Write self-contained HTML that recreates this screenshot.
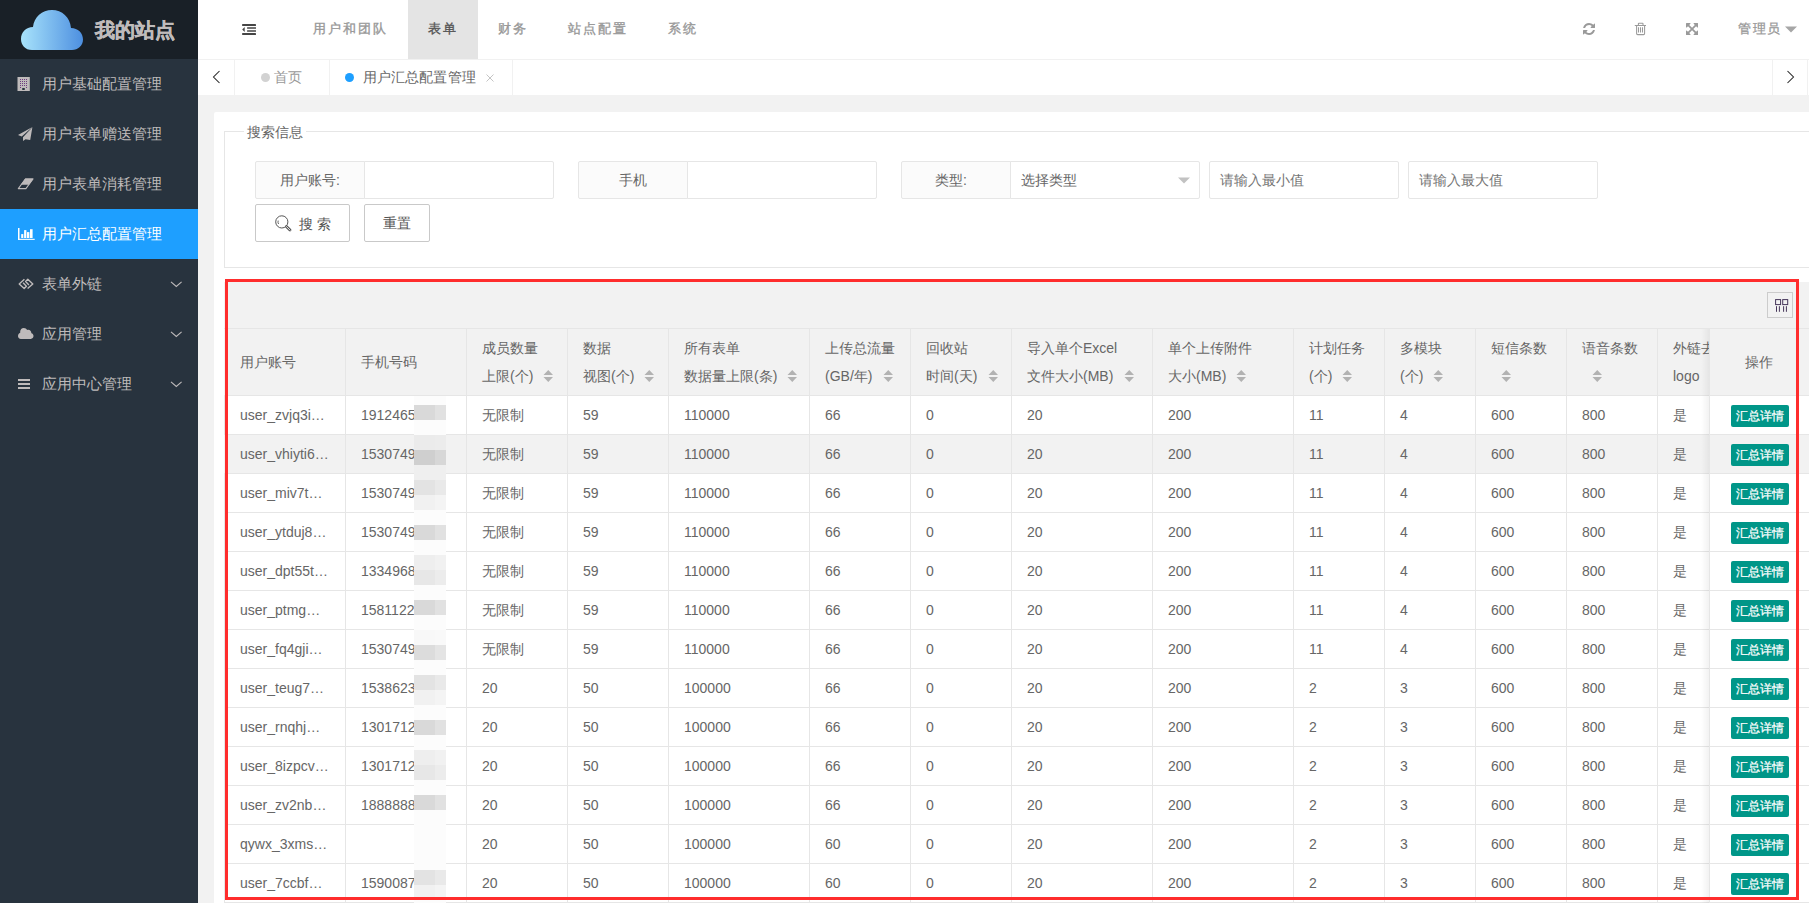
<!DOCTYPE html><html><head><meta charset="utf-8"><style>
*{margin:0;padding:0;box-sizing:border-box}
html,body{width:1809px;height:903px;overflow:hidden;background:#f2f2f2;font-family:"Liberation Sans", sans-serif;}
.a{position:absolute;white-space:nowrap}
.side{position:absolute;left:0;top:0;width:198px;height:903px;background:#28333E}
.logo{position:absolute;left:0;top:0;width:198px;height:59px;background:#192027}
.mi{position:absolute;left:0;width:198px;height:50px;color:rgb(191,187,187);font-size:15px;line-height:50px}
.mi .t{position:absolute;left:42px;top:0}
.mi svg{position:absolute}
.hd{position:absolute;left:198px;top:0;width:1611px;height:59px;background:#fff}
.nav{color:#989898;font-size:12.5px;letter-spacing:2.1px;line-height:20px;top:19px;-webkit-text-stroke:0.35px}
.tabbar{position:absolute;left:198px;top:59px;width:1611px;height:36px;background:#fff;border-top:1px solid #f1f1f1}
.card{position:absolute;left:214px;top:112px;width:1600px;height:800px;background:#fff;border-radius:2px}
.fs{position:absolute;left:224px;top:131px;width:1600px;height:137px;border:1px solid #e6e6e6}
.lbl{position:absolute;top:161px;height:38px;width:110px;border:1px solid #e6e6e6;background:#fbfbfb;border-radius:2px 0 0 2px;color:#666;font-size:14px;line-height:36px;text-align:center}
.inp{position:absolute;top:161px;height:38px;width:190px;border:1px solid #e6e6e6;background:#fff;border-radius:0 2px 2px 0;color:#757575;font-size:14px;line-height:36px;padding-left:10px}
.btn{position:absolute;top:204px;height:38px;border:1px solid #c9c9c9;background:#fff;border-radius:2px;color:#555;font-size:14px;line-height:36px}
.tb{color:#666;font-size:14px;line-height:20px}
.hl{position:absolute;height:1px;background:#e6e6e6}
.vl{position:absolute;width:1px;background:#e6e6e6}
.op{position:absolute;width:58px;height:22px;background:#009688;color:#fff;font-size:12px;line-height:22px;text-align:center;border-radius:2px;-webkit-text-stroke:0.25px #fff}
</style></head><body>
<div class="side"></div><div class="logo"></div>
<svg class="a" style="left:20px;top:9px" width="64" height="42" viewBox="0 0 64 42">
<defs><linearGradient id="cg" x1="0" x2="1" y1="0" y2="0"><stop offset="0" stop-color="#a8e3fb"/><stop offset="1" stop-color="#4d8fe0"/></linearGradient></defs>
<path fill="url(#cg)" d="M12,41 C5,41 1,36 1,30 C1,23 6,18 13,18 C14,8 22,1 32,1 C42,1 50,8 51,19 C58,19 63,24 63,30.5 C63,36.5 58,41 52,41 Z"/></svg>
<div class="a" style="left:95px;top:16px;font-size:20px;font-weight:bold;-webkit-text-stroke:0.4px rgb(191,187,187);color:rgb(191,187,187);line-height:28px">我的站点</div>
<div class="mi" style="top:59px;"><span class="t">用户基础配置管理</span>
</div>
<div class="mi" style="top:109px;"><span class="t">用户表单赠送管理</span>
</div>
<div class="mi" style="top:159px;"><span class="t">用户表单消耗管理</span>
</div>
<div class="mi" style="top:209px;background:#1E9FFF;color:#fff;"><span class="t">用户汇总配置管理</span>
</div>
<div class="mi" style="top:259px;"><span class="t">表单外链</span>
<svg style="left:170px;top:22px" width="13" height="7" viewBox="0 0 13 7"><path d="M1,0.8 L6.3,5.4 L11.6,0.8" fill="none" stroke="rgb(191,187,187)" stroke-width="1.1"/></svg>
</div>
<div class="mi" style="top:309px;"><span class="t">应用管理</span>
<svg style="left:170px;top:22px" width="13" height="7" viewBox="0 0 13 7"><path d="M1,0.8 L6.3,5.4 L11.6,0.8" fill="none" stroke="rgb(191,187,187)" stroke-width="1.1"/></svg>
</div>
<div class="mi" style="top:359px;"><span class="t">应用中心管理</span>
<svg style="left:170px;top:22px" width="13" height="7" viewBox="0 0 13 7"><path d="M1,0.8 L6.3,5.4 L11.6,0.8" fill="none" stroke="rgb(191,187,187)" stroke-width="1.1"/></svg>
</div>
<svg class="a" style="left:17px;top:77px" width="13" height="14" viewBox="0 0 13 14"><rect x="0.5" y="0" width="12.3" height="14" fill="rgb(191,187,187)"/>
<g fill="#6e3d80"><rect x="3" y="2" width="1" height="1"/><rect x="5" y="2" width="1" height="1"/><rect x="7" y="2" width="1" height="1"/><rect x="9" y="2" width="1" height="1"/><rect x="3" y="4" width="1" height="1"/><rect x="5" y="4" width="1" height="1"/><rect x="7" y="4" width="1" height="1"/><rect x="9" y="4" width="1" height="1"/><rect x="3" y="6" width="1" height="1"/><rect x="5" y="6" width="1" height="1"/><rect x="7" y="6" width="1" height="1"/><rect x="9" y="6" width="1" height="1"/><rect x="3" y="8" width="1" height="1"/><rect x="5" y="8" width="1" height="1"/><rect x="7" y="8" width="1" height="1"/><rect x="9" y="8" width="1" height="1"/><rect x="3" y="10" width="1" height="1"/><rect x="9" y="10" width="1" height="1"/></g><rect x="5" y="11" width="3" height="2" rx="1" fill="#28333E"/></svg>
<svg class="a" style="left:18px;top:127px" width="15" height="15" viewBox="0 0 15 15"><path d="M14.4,0 L0,8 L3.7,9.5 Z M14.4,0.2 L5,10.2 L5,14 L7.5,12.2 L12.2,13 Z" fill="rgb(191,187,187)"/></svg>
<svg class="a" style="left:17px;top:178px" width="18" height="12" viewBox="0 0 18 12"><path d="M8.4,1 L16,1 L8.9,10.6 L1.3,10.6 Z" fill="none" stroke="rgb(191,187,187)" stroke-width="1.1" stroke-linejoin="round"/><path d="M8.2,0.5 L16.5,0.5 L12,6.8 L3.8,6.8 Z" fill="rgb(191,187,187)"/></svg>
<svg class="a" style="left:18px;top:228px" width="17" height="12" viewBox="0 0 17 12"><rect x="0" y="0" width="1.5" height="12" fill="#fff"/><rect x="0" y="10.8" width="16.7" height="1.1" fill="#fff"/><rect x="3.2" y="6.1" width="2.1" height="3.9" fill="#fff"/><rect x="6.1" y="2.1" width="2.3" height="7.9" fill="#fff"/><rect x="9" y="4.1" width="2.4" height="5.9" fill="#fff"/><rect x="12" y="1.2" width="2.6" height="8.8" fill="#fff"/></svg>
<svg class="a" style="left:18px;top:278px" width="16" height="12" viewBox="0 0 16 12"><path d="M6.4,1.3 L1.2,5.9 L6.2,10.5 L8.4,8.3 L5.1,4.8 M9.6,10.5 L14.8,5.9 L9.8,1.3 L7.6,3.5 L10.9,7" fill="none" stroke="rgb(191,187,187)" stroke-width="1.4" stroke-linejoin="round"/></svg>
<svg class="a" style="left:18px;top:327px" width="16" height="13" viewBox="0 0 16 13"><path d="M2.8,11.9 H12.8 C14.4,11.9 15.5,10.7 15.5,9.1 C15.5,7.6 14.6,6.5 13.4,6.2 C13.3,4.2 12,2.8 10.3,2.8 C9.9,2.8 9.5,2.9 9.2,3.1 C8.5,1.8 7.3,1 5.8,1 C3.7,1 2.2,2.6 2.2,4.6 L2.2,5.8 C0.9,6.3 0,7.5 0,9 C0,10.6 1.2,11.9 2.8,11.9 Z" fill="rgb(191,187,187)"/></svg>
<svg class="a" style="left:18px;top:379px" width="12" height="10" viewBox="0 0 12 10"><rect x="0" y="0" width="12" height="2" fill="rgb(191,187,187)"/><rect x="0" y="4" width="12" height="2" fill="rgb(191,187,187)"/><rect x="0" y="8" width="12" height="2" fill="rgb(191,187,187)"/></svg>
<div class="hd"></div>
<div class="a" style="left:408px;top:0;width:70px;height:59px;background:#e4e4e4"></div>
<svg class="a" style="left:242px;top:23px" width="14" height="12" viewBox="0 0 14 12"><g fill="#454545"><rect x="0.1" y="1.1" width="13.9" height="1.8" rx="0.3"/><rect x="5.1" y="4.25" width="8.9" height="1.5" rx="0.3"/><rect x="5.1" y="7.2" width="8.9" height="1.5" rx="0.3"/><rect x="0.1" y="10.1" width="13.9" height="1.8" rx="0.3"/><path d="M0.2,6.5 L2.7,4 L2.7,9 Z"/></g></svg>
<div class="a nav" style="left:313px;color:#989898">用户和团队</div>
<div class="a nav" style="left:428px;color:#565656">表单</div>
<div class="a nav" style="left:498px;color:#989898">财务</div>
<div class="a nav" style="left:568px;color:#989898">站点配置</div>
<div class="a nav" style="left:668px;color:#989898">系统</div>
<svg class="a" style="left:1582.9px;top:22.8px" width="12.1" height="12" viewBox="0 0 1536 1536" preserveAspectRatio="none"><path fill="#9a9a9a" d="M1511 928q0 5-1 7-64 268-268 434.5t-478 166.5q-146 0-282.5-55t-243.5-157l-129 129q-19 19-45 19t-45-19-19-45v-448q0-26 19-45t45-19h448q26 0 45 19t19 45-19 45l-137 137q71 66 161 102t187 36q134 0 250-65t186-179q11-17 53-117 8-23 30-23h192q13 0 22.5 9.5t9.5 22.5zm25-800v448q0 26-19 45t-45 19h-448q-26 0-45-19t-19-45 19-45l138-138q-148-137-349-137-134 0-250 65t-186 179q-11 17-53 117-8 23-30 23h-199q-13 0-22.5-9.5t-9.5-22.5v-7q65-268 270-434.5t480-166.5q146 0 284 55.5t245 156.5l130-129q19-19 45-19t45 19 19 45z"/></svg>
<svg class="a" style="left:1634px;top:22px" width="13" height="14" viewBox="0 0 13 14"><path d="M0.8,3.4 H12 M4.4,3.2 V1.8 Q4.4,1.3 4.9,1.3 H8.5 Q9,1.3 9,1.8 V3.2 M2.6,3.4 V11.6 Q2.6,12.6 3.6,12.6 H9.6 Q10.6,12.6 10.6,11.6 V3.4 M4.5,5.2 V10.6 M6.5,5.2 V10.6 M8.5,5.2 V10.6" fill="none" stroke="#9a9a9a" stroke-width="1.05"/></svg>
<svg class="a" style="left:1685.9px;top:22.9px" width="12.1" height="12.1" viewBox="0 0 1536 1536"><g transform="translate(0,1536) scale(1,-1)"><path fill="#9a9a9a" d="M1283 413l-355 355 355 355 144-144q29-31 70-14 39 17 39 59v448q0 26-19 45t-45 19h-448q-42 0-59-40-17-39 14-69l144-144-355-355-355 355 144 144q31 30 14 69-17 40-59 40h-448q-26 0-45-19t-19-45v-448q0-42 40-59 39-17 69 14l144 144 355-355-355-355-144 144q-19 19-45 19-12 0-24-5-40-17-40-59v-448q0-26 19-45t45-19h448q42 0 59 40 17 39-14 69l-144 144 355 355 355-355-144-144q-31-30-14-69 17-40 59-40h448q26 0 45 19t19 45v448q0 42-39 59-13 5-25 5-26 0-45-19z"/></g></svg>
<div class="a" style="left:1738px;top:19px;font-size:12.5px;letter-spacing:1.7px;line-height:20px;color:#989898;-webkit-text-stroke:0.3px">管理员</div>
<svg class="a" style="left:1785px;top:26px" width="12" height="7" viewBox="0 0 12 7"><path d="M0,0.5 H12 L6,6.5 Z" fill="#a6a6a6"/></svg>
<div class="tabbar"></div>
<div class="vl" style="left:234px;top:60px;height:35px;background:#f1f1f1"></div>
<div class="vl" style="left:329px;top:60px;height:35px;background:#f1f1f1"></div>
<div class="vl" style="left:512px;top:60px;height:35px;background:#f1f1f1"></div>
<div class="vl" style="left:1772px;top:60px;height:35px;background:#f1f1f1"></div><div class="vl" style="left:1807px;top:60px;height:35px;background:#f1f1f1"></div>
<svg class="a" style="left:212px;top:70px" width="9" height="14" viewBox="0 0 9 14"><path d="M7.5,1 L1.5,7 L7.5,13" fill="none" stroke="#222" stroke-width="1.05"/></svg>
<svg class="a" style="left:1786px;top:70px" width="9" height="14" viewBox="0 0 9 14"><path d="M1.5,1 L7.5,7 L1.5,13" fill="none" stroke="#222" stroke-width="1.05"/></svg>
<div class="a" style="left:261px;top:73px;width:9px;height:9px;border-radius:50%;background:#d2d2d2"></div>
<div class="a" style="left:274px;top:67px;font-size:14px;line-height:20px;color:#999">首页</div>
<div class="a" style="left:345px;top:73px;width:9px;height:9px;border-radius:50%;background:#1e9fff"></div>
<div class="a" style="left:362.5px;top:67px;font-size:14px;letter-spacing:0.2px;line-height:20px;color:#666">用户汇总配置管理</div>
<svg class="a" style="left:486px;top:74px" width="8" height="8" viewBox="0 0 8 8"><path d="M0.5,0.5 L7.5,7.5 M7.5,0.5 L0.5,7.5" stroke="#c4c4c4" stroke-width="1"/></svg>
<div class="card"></div>
<div class="fs"></div>
<div class="a" style="left:244px;top:122px;width:62px;height:20px;background:#fff"></div>
<div class="a" style="left:247px;top:122px;font-size:14px;line-height:20px;color:#666">搜索信息</div>
<div class="lbl" style="left:255px">用户账号:</div><div class="inp" style="left:364px"></div>
<div class="lbl" style="left:578px">手机</div><div class="inp" style="left:687px"></div>
<div class="lbl" style="left:901px;text-align:left;padding-left:33px">类型:</div><div class="inp" style="left:1010px;color:#666">选择类型</div>
<svg class="a" style="left:1178px;top:177px" width="12" height="7" viewBox="0 0 12 7"><path d="M0,0.5 H12 L6,6.5 Z" fill="#c2c2c2"/></svg>
<div class="inp" style="left:1209px;border-radius:2px">请输入最小值</div>
<div class="inp" style="left:1408px;border-radius:2px">请输入最大值</div>
<div class="btn" style="left:255px;width:95px"></div>
<svg class="a" style="left:275px;top:215px" width="18" height="18" viewBox="0 0 18 18"><circle cx="6.8" cy="6.9" r="6.1" fill="none" stroke="#555" stroke-width="1"/><path d="M11.4,11.5 L15,15.1" stroke="#555" stroke-width="2.8" stroke-linecap="round"/><path d="M11.4,11.5 L15,15.1" stroke="#fff" stroke-width="0.9" stroke-linecap="round"/><path d="M3.2,5.6 A3.8,3.8 0 0 0 3.6,9" fill="none" stroke="#555" stroke-width="0.9"/></svg>
<div class="a" style="left:299px;top:214px;font-size:14px;line-height:20px;color:#555">搜 索</div>
<div class="btn" style="left:364px;width:66px"></div>
<div class="a" style="left:383px;top:213px;font-size:14px;line-height:20px;color:#555">重置</div>
<div class="a" style="left:224px;top:282px;width:1591px;height:630px;background:#fff;border:1px solid #e6e6e6"></div>
<div class="a" style="left:224px;top:282px;width:1591px;height:47px;background:#f2f2f2"></div>
<div class="hl" style="left:224px;top:328px;width:1591px"></div>
<div class="a" style="left:224px;top:329px;width:1591px;height:66px;background:#f2f2f2"></div>
<div class="a" style="left:224px;top:435px;width:1591px;height:38px;background:#f2f2f2"></div>
<div class="a" style="left:1767px;top:292px;width:26px;height:26px;border:1px solid #ccc"></div>
<svg class="a" style="left:1775px;top:299px" width="14" height="13" viewBox="0 0 14 13"><g fill="none" stroke="#46365a" stroke-width="1"><rect x="0.6" y="0.6" width="5" height="5"/><rect x="7.7" y="0.6" width="5" height="5"/><path d="M1.5,7.2 V12.8 M4.4,7.2 V12.8 M8.6,7.2 V12.8 M11.4,7.2 V12.8"/></g></svg>
<div class="vl" style="left:345px;top:329px;height:580px"></div>
<div class="vl" style="left:466px;top:329px;height:580px"></div>
<div class="vl" style="left:567px;top:329px;height:580px"></div>
<div class="vl" style="left:668px;top:329px;height:580px"></div>
<div class="vl" style="left:809px;top:329px;height:580px"></div>
<div class="vl" style="left:910px;top:329px;height:580px"></div>
<div class="vl" style="left:1011px;top:329px;height:580px"></div>
<div class="vl" style="left:1152px;top:329px;height:580px"></div>
<div class="vl" style="left:1293px;top:329px;height:580px"></div>
<div class="vl" style="left:1384px;top:329px;height:580px"></div>
<div class="vl" style="left:1475px;top:329px;height:580px"></div>
<div class="vl" style="left:1566px;top:329px;height:580px"></div>
<div class="vl" style="left:1657px;top:329px;height:580px"></div>
<div class="hl" style="left:224px;top:395px;width:1591px"></div>
<div class="hl" style="left:224px;top:434px;width:1591px"></div>
<div class="hl" style="left:224px;top:473px;width:1591px"></div>
<div class="hl" style="left:224px;top:512px;width:1591px"></div>
<div class="hl" style="left:224px;top:551px;width:1591px"></div>
<div class="hl" style="left:224px;top:590px;width:1591px"></div>
<div class="hl" style="left:224px;top:629px;width:1591px"></div>
<div class="hl" style="left:224px;top:668px;width:1591px"></div>
<div class="hl" style="left:224px;top:707px;width:1591px"></div>
<div class="hl" style="left:224px;top:746px;width:1591px"></div>
<div class="hl" style="left:224px;top:785px;width:1591px"></div>
<div class="hl" style="left:224px;top:824px;width:1591px"></div>
<div class="hl" style="left:224px;top:863px;width:1591px"></div>
<div class="hl" style="left:224px;top:902px;width:1591px"></div>
<div class="a tb" style="left:240px;top:352px">用户账号</div>
<div class="a tb" style="left:361px;top:352px">手机号码</div>
<div class="a tb" style="left:482px;top:338px">成员数量</div>
<div class="a tb" style="left:482px;top:366px">上限(个)</div>
<svg class="a" style="left:543.0px;top:369px" width="11" height="14" viewBox="0 0 11 14"><path d="M0.5,6 L5.25,1 L10,6 Z M0.5,8 L10,8 L5.25,13 Z" fill="#b2b2b2"/></svg>
<div class="a tb" style="left:583px;top:338px">数据</div>
<div class="a tb" style="left:583px;top:366px">视图(个)</div>
<svg class="a" style="left:643.5px;top:369px" width="11" height="14" viewBox="0 0 11 14"><path d="M0.5,6 L5.25,1 L10,6 Z M0.5,8 L10,8 L5.25,13 Z" fill="#b2b2b2"/></svg>
<div class="a tb" style="left:684px;top:338px">所有表单</div>
<div class="a tb" style="left:684px;top:366px">数据量上限(条)</div>
<svg class="a" style="left:786.5px;top:369px" width="11" height="14" viewBox="0 0 11 14"><path d="M0.5,6 L5.25,1 L10,6 Z M0.5,8 L10,8 L5.25,13 Z" fill="#b2b2b2"/></svg>
<div class="a tb" style="left:825px;top:338px">上传总流量</div>
<div class="a tb" style="left:825px;top:366px">(GB/年)</div>
<svg class="a" style="left:882.5px;top:369px" width="11" height="14" viewBox="0 0 11 14"><path d="M0.5,6 L5.25,1 L10,6 Z M0.5,8 L10,8 L5.25,13 Z" fill="#b2b2b2"/></svg>
<div class="a tb" style="left:926px;top:338px">回收站</div>
<div class="a tb" style="left:926px;top:366px">时间(天)</div>
<svg class="a" style="left:987.5px;top:369px" width="11" height="14" viewBox="0 0 11 14"><path d="M0.5,6 L5.25,1 L10,6 Z M0.5,8 L10,8 L5.25,13 Z" fill="#b2b2b2"/></svg>
<div class="a tb" style="left:1027px;top:338px">导入单个Excel</div>
<div class="a tb" style="left:1027px;top:366px">文件大小(MB)</div>
<svg class="a" style="left:1123.5px;top:369px" width="11" height="14" viewBox="0 0 11 14"><path d="M0.5,6 L5.25,1 L10,6 Z M0.5,8 L10,8 L5.25,13 Z" fill="#b2b2b2"/></svg>
<div class="a tb" style="left:1168px;top:338px">单个上传附件</div>
<div class="a tb" style="left:1168px;top:366px">大小(MB)</div>
<svg class="a" style="left:1236.0px;top:369px" width="11" height="14" viewBox="0 0 11 14"><path d="M0.5,6 L5.25,1 L10,6 Z M0.5,8 L10,8 L5.25,13 Z" fill="#b2b2b2"/></svg>
<div class="a tb" style="left:1309px;top:338px">计划任务</div>
<div class="a tb" style="left:1309px;top:366px">(个)</div>
<svg class="a" style="left:1342.0px;top:369px" width="11" height="14" viewBox="0 0 11 14"><path d="M0.5,6 L5.25,1 L10,6 Z M0.5,8 L10,8 L5.25,13 Z" fill="#b2b2b2"/></svg>
<div class="a tb" style="left:1400px;top:338px">多模块</div>
<div class="a tb" style="left:1400px;top:366px">(个)</div>
<svg class="a" style="left:1433.0px;top:369px" width="11" height="14" viewBox="0 0 11 14"><path d="M0.5,6 L5.25,1 L10,6 Z M0.5,8 L10,8 L5.25,13 Z" fill="#b2b2b2"/></svg>
<div class="a tb" style="left:1491px;top:338px">短信条数</div>
<svg class="a" style="left:1500.5px;top:369px" width="11" height="14" viewBox="0 0 11 14"><path d="M0.5,6 L5.25,1 L10,6 Z M0.5,8 L10,8 L5.25,13 Z" fill="#b2b2b2"/></svg>
<div class="a tb" style="left:1582px;top:338px">语音条数</div>
<svg class="a" style="left:1592.0px;top:369px" width="11" height="14" viewBox="0 0 11 14"><path d="M0.5,6 L5.25,1 L10,6 Z M0.5,8 L10,8 L5.25,13 Z" fill="#b2b2b2"/></svg>
<div class="a tb" style="left:1673px;top:338px">外链去</div>
<div class="a tb" style="left:1673px;top:366px">logo</div>
<div class="a tb" style="left:240px;top:405px">user_zvjq3i…</div>
<div class="a tb" style="left:361px;top:405px">1912465</div>
<div class="a tb" style="left:482px;top:405px">无限制</div>
<div class="a tb" style="left:583px;top:405px">59</div>
<div class="a tb" style="left:684px;top:405px">110000</div>
<div class="a tb" style="left:825px;top:405px">66</div>
<div class="a tb" style="left:926px;top:405px">0</div>
<div class="a tb" style="left:1027px;top:405px">20</div>
<div class="a tb" style="left:1168px;top:405px">200</div>
<div class="a tb" style="left:1309px;top:405px">11</div>
<div class="a tb" style="left:1400px;top:405px">4</div>
<div class="a tb" style="left:1491px;top:405px">600</div>
<div class="a tb" style="left:1582px;top:405px">800</div>
<div class="a tb" style="left:1673px;top:405px">是</div>
<div class="a tb" style="left:240px;top:444px">user_vhiyti6…</div>
<div class="a tb" style="left:361px;top:444px">1530749</div>
<div class="a tb" style="left:482px;top:444px">无限制</div>
<div class="a tb" style="left:583px;top:444px">59</div>
<div class="a tb" style="left:684px;top:444px">110000</div>
<div class="a tb" style="left:825px;top:444px">66</div>
<div class="a tb" style="left:926px;top:444px">0</div>
<div class="a tb" style="left:1027px;top:444px">20</div>
<div class="a tb" style="left:1168px;top:444px">200</div>
<div class="a tb" style="left:1309px;top:444px">11</div>
<div class="a tb" style="left:1400px;top:444px">4</div>
<div class="a tb" style="left:1491px;top:444px">600</div>
<div class="a tb" style="left:1582px;top:444px">800</div>
<div class="a tb" style="left:1673px;top:444px">是</div>
<div class="a tb" style="left:240px;top:483px">user_miv7t…</div>
<div class="a tb" style="left:361px;top:483px">1530749</div>
<div class="a tb" style="left:482px;top:483px">无限制</div>
<div class="a tb" style="left:583px;top:483px">59</div>
<div class="a tb" style="left:684px;top:483px">110000</div>
<div class="a tb" style="left:825px;top:483px">66</div>
<div class="a tb" style="left:926px;top:483px">0</div>
<div class="a tb" style="left:1027px;top:483px">20</div>
<div class="a tb" style="left:1168px;top:483px">200</div>
<div class="a tb" style="left:1309px;top:483px">11</div>
<div class="a tb" style="left:1400px;top:483px">4</div>
<div class="a tb" style="left:1491px;top:483px">600</div>
<div class="a tb" style="left:1582px;top:483px">800</div>
<div class="a tb" style="left:1673px;top:483px">是</div>
<div class="a tb" style="left:240px;top:522px">user_ytduj8…</div>
<div class="a tb" style="left:361px;top:522px">1530749</div>
<div class="a tb" style="left:482px;top:522px">无限制</div>
<div class="a tb" style="left:583px;top:522px">59</div>
<div class="a tb" style="left:684px;top:522px">110000</div>
<div class="a tb" style="left:825px;top:522px">66</div>
<div class="a tb" style="left:926px;top:522px">0</div>
<div class="a tb" style="left:1027px;top:522px">20</div>
<div class="a tb" style="left:1168px;top:522px">200</div>
<div class="a tb" style="left:1309px;top:522px">11</div>
<div class="a tb" style="left:1400px;top:522px">4</div>
<div class="a tb" style="left:1491px;top:522px">600</div>
<div class="a tb" style="left:1582px;top:522px">800</div>
<div class="a tb" style="left:1673px;top:522px">是</div>
<div class="a tb" style="left:240px;top:561px">user_dpt55t…</div>
<div class="a tb" style="left:361px;top:561px">1334968</div>
<div class="a tb" style="left:482px;top:561px">无限制</div>
<div class="a tb" style="left:583px;top:561px">59</div>
<div class="a tb" style="left:684px;top:561px">110000</div>
<div class="a tb" style="left:825px;top:561px">66</div>
<div class="a tb" style="left:926px;top:561px">0</div>
<div class="a tb" style="left:1027px;top:561px">20</div>
<div class="a tb" style="left:1168px;top:561px">200</div>
<div class="a tb" style="left:1309px;top:561px">11</div>
<div class="a tb" style="left:1400px;top:561px">4</div>
<div class="a tb" style="left:1491px;top:561px">600</div>
<div class="a tb" style="left:1582px;top:561px">800</div>
<div class="a tb" style="left:1673px;top:561px">是</div>
<div class="a tb" style="left:240px;top:600px">user_ptmg…</div>
<div class="a tb" style="left:361px;top:600px">1581122</div>
<div class="a tb" style="left:482px;top:600px">无限制</div>
<div class="a tb" style="left:583px;top:600px">59</div>
<div class="a tb" style="left:684px;top:600px">110000</div>
<div class="a tb" style="left:825px;top:600px">66</div>
<div class="a tb" style="left:926px;top:600px">0</div>
<div class="a tb" style="left:1027px;top:600px">20</div>
<div class="a tb" style="left:1168px;top:600px">200</div>
<div class="a tb" style="left:1309px;top:600px">11</div>
<div class="a tb" style="left:1400px;top:600px">4</div>
<div class="a tb" style="left:1491px;top:600px">600</div>
<div class="a tb" style="left:1582px;top:600px">800</div>
<div class="a tb" style="left:1673px;top:600px">是</div>
<div class="a tb" style="left:240px;top:639px">user_fq4gji…</div>
<div class="a tb" style="left:361px;top:639px">1530749</div>
<div class="a tb" style="left:482px;top:639px">无限制</div>
<div class="a tb" style="left:583px;top:639px">59</div>
<div class="a tb" style="left:684px;top:639px">110000</div>
<div class="a tb" style="left:825px;top:639px">66</div>
<div class="a tb" style="left:926px;top:639px">0</div>
<div class="a tb" style="left:1027px;top:639px">20</div>
<div class="a tb" style="left:1168px;top:639px">200</div>
<div class="a tb" style="left:1309px;top:639px">11</div>
<div class="a tb" style="left:1400px;top:639px">4</div>
<div class="a tb" style="left:1491px;top:639px">600</div>
<div class="a tb" style="left:1582px;top:639px">800</div>
<div class="a tb" style="left:1673px;top:639px">是</div>
<div class="a tb" style="left:240px;top:678px">user_teug7…</div>
<div class="a tb" style="left:361px;top:678px">1538623</div>
<div class="a tb" style="left:482px;top:678px">20</div>
<div class="a tb" style="left:583px;top:678px">50</div>
<div class="a tb" style="left:684px;top:678px">100000</div>
<div class="a tb" style="left:825px;top:678px">66</div>
<div class="a tb" style="left:926px;top:678px">0</div>
<div class="a tb" style="left:1027px;top:678px">20</div>
<div class="a tb" style="left:1168px;top:678px">200</div>
<div class="a tb" style="left:1309px;top:678px">2</div>
<div class="a tb" style="left:1400px;top:678px">3</div>
<div class="a tb" style="left:1491px;top:678px">600</div>
<div class="a tb" style="left:1582px;top:678px">800</div>
<div class="a tb" style="left:1673px;top:678px">是</div>
<div class="a tb" style="left:240px;top:717px">user_rnqhj…</div>
<div class="a tb" style="left:361px;top:717px">1301712</div>
<div class="a tb" style="left:482px;top:717px">20</div>
<div class="a tb" style="left:583px;top:717px">50</div>
<div class="a tb" style="left:684px;top:717px">100000</div>
<div class="a tb" style="left:825px;top:717px">66</div>
<div class="a tb" style="left:926px;top:717px">0</div>
<div class="a tb" style="left:1027px;top:717px">20</div>
<div class="a tb" style="left:1168px;top:717px">200</div>
<div class="a tb" style="left:1309px;top:717px">2</div>
<div class="a tb" style="left:1400px;top:717px">3</div>
<div class="a tb" style="left:1491px;top:717px">600</div>
<div class="a tb" style="left:1582px;top:717px">800</div>
<div class="a tb" style="left:1673px;top:717px">是</div>
<div class="a tb" style="left:240px;top:756px">user_8izpcv…</div>
<div class="a tb" style="left:361px;top:756px">1301712</div>
<div class="a tb" style="left:482px;top:756px">20</div>
<div class="a tb" style="left:583px;top:756px">50</div>
<div class="a tb" style="left:684px;top:756px">100000</div>
<div class="a tb" style="left:825px;top:756px">66</div>
<div class="a tb" style="left:926px;top:756px">0</div>
<div class="a tb" style="left:1027px;top:756px">20</div>
<div class="a tb" style="left:1168px;top:756px">200</div>
<div class="a tb" style="left:1309px;top:756px">2</div>
<div class="a tb" style="left:1400px;top:756px">3</div>
<div class="a tb" style="left:1491px;top:756px">600</div>
<div class="a tb" style="left:1582px;top:756px">800</div>
<div class="a tb" style="left:1673px;top:756px">是</div>
<div class="a tb" style="left:240px;top:795px">user_zv2nb…</div>
<div class="a tb" style="left:361px;top:795px">1888888</div>
<div class="a tb" style="left:482px;top:795px">20</div>
<div class="a tb" style="left:583px;top:795px">50</div>
<div class="a tb" style="left:684px;top:795px">100000</div>
<div class="a tb" style="left:825px;top:795px">66</div>
<div class="a tb" style="left:926px;top:795px">0</div>
<div class="a tb" style="left:1027px;top:795px">20</div>
<div class="a tb" style="left:1168px;top:795px">200</div>
<div class="a tb" style="left:1309px;top:795px">2</div>
<div class="a tb" style="left:1400px;top:795px">3</div>
<div class="a tb" style="left:1491px;top:795px">600</div>
<div class="a tb" style="left:1582px;top:795px">800</div>
<div class="a tb" style="left:1673px;top:795px">是</div>
<div class="a tb" style="left:240px;top:834px">qywx_3xms…</div>
<div class="a tb" style="left:482px;top:834px">20</div>
<div class="a tb" style="left:583px;top:834px">50</div>
<div class="a tb" style="left:684px;top:834px">100000</div>
<div class="a tb" style="left:825px;top:834px">60</div>
<div class="a tb" style="left:926px;top:834px">0</div>
<div class="a tb" style="left:1027px;top:834px">20</div>
<div class="a tb" style="left:1168px;top:834px">200</div>
<div class="a tb" style="left:1309px;top:834px">2</div>
<div class="a tb" style="left:1400px;top:834px">3</div>
<div class="a tb" style="left:1491px;top:834px">600</div>
<div class="a tb" style="left:1582px;top:834px">800</div>
<div class="a tb" style="left:1673px;top:834px">是</div>
<div class="a tb" style="left:240px;top:873px">user_7ccbf…</div>
<div class="a tb" style="left:361px;top:873px">1590087</div>
<div class="a tb" style="left:482px;top:873px">20</div>
<div class="a tb" style="left:583px;top:873px">50</div>
<div class="a tb" style="left:684px;top:873px">100000</div>
<div class="a tb" style="left:825px;top:873px">60</div>
<div class="a tb" style="left:926px;top:873px">0</div>
<div class="a tb" style="left:1027px;top:873px">20</div>
<div class="a tb" style="left:1168px;top:873px">200</div>
<div class="a tb" style="left:1309px;top:873px">2</div>
<div class="a tb" style="left:1400px;top:873px">3</div>
<div class="a tb" style="left:1491px;top:873px">600</div>
<div class="a tb" style="left:1582px;top:873px">800</div>
<div class="a tb" style="left:1673px;top:873px">是</div>
<div class="a" style="left:414px;top:396px;width:21px;height:9px;background:rgb(252,252,252)"></div>
<div class="a" style="left:435px;top:396px;width:11px;height:9px;background:rgb(252,252,252)"></div>
<div class="a" style="left:414px;top:405px;width:21px;height:15px;background:rgb(217,217,217)"></div>
<div class="a" style="left:435px;top:405px;width:11px;height:15px;background:rgb(225,225,225)"></div>
<div class="a" style="left:414px;top:420px;width:21px;height:15px;background:rgb(252,252,252)"></div>
<div class="a" style="left:435px;top:420px;width:11px;height:15px;background:rgb(252,252,252)"></div>
<div class="a" style="left:414px;top:435px;width:21px;height:15px;background:rgb(235,235,235)"></div>
<div class="a" style="left:435px;top:435px;width:11px;height:15px;background:rgb(236,236,236)"></div>
<div class="a" style="left:414px;top:450px;width:21px;height:15px;background:rgb(207,207,207)"></div>
<div class="a" style="left:435px;top:450px;width:11px;height:15px;background:rgb(215,215,215)"></div>
<div class="a" style="left:414px;top:465px;width:21px;height:15px;background:rgb(239,239,239)"></div>
<div class="a" style="left:435px;top:465px;width:11px;height:15px;background:rgb(239,239,239)"></div>
<div class="a" style="left:414px;top:480px;width:21px;height:15px;background:rgb(227,227,227)"></div>
<div class="a" style="left:435px;top:480px;width:11px;height:15px;background:rgb(233,233,233)"></div>
<div class="a" style="left:414px;top:495px;width:21px;height:15px;background:rgb(241,241,241)"></div>
<div class="a" style="left:435px;top:495px;width:11px;height:15px;background:rgb(244,244,244)"></div>
<div class="a" style="left:414px;top:510px;width:21px;height:15px;background:rgb(252,252,252)"></div>
<div class="a" style="left:435px;top:510px;width:11px;height:15px;background:rgb(252,252,252)"></div>
<div class="a" style="left:414px;top:525px;width:21px;height:15px;background:rgb(217,217,217)"></div>
<div class="a" style="left:435px;top:525px;width:11px;height:15px;background:rgb(225,225,225)"></div>
<div class="a" style="left:414px;top:540px;width:21px;height:15px;background:rgb(252,252,252)"></div>
<div class="a" style="left:435px;top:540px;width:11px;height:15px;background:rgb(252,252,252)"></div>
<div class="a" style="left:414px;top:555px;width:21px;height:15px;background:rgb(238,238,238)"></div>
<div class="a" style="left:435px;top:555px;width:11px;height:15px;background:rgb(241,241,241)"></div>
<div class="a" style="left:414px;top:570px;width:21px;height:15px;background:rgb(231,231,231)"></div>
<div class="a" style="left:435px;top:570px;width:11px;height:15px;background:rgb(236,236,236)"></div>
<div class="a" style="left:414px;top:585px;width:21px;height:15px;background:rgb(252,252,252)"></div>
<div class="a" style="left:435px;top:585px;width:11px;height:15px;background:rgb(252,252,252)"></div>
<div class="a" style="left:414px;top:600px;width:21px;height:15px;background:rgb(217,217,217)"></div>
<div class="a" style="left:435px;top:600px;width:11px;height:15px;background:rgb(225,225,225)"></div>
<div class="a" style="left:414px;top:615px;width:21px;height:15px;background:rgb(252,252,252)"></div>
<div class="a" style="left:435px;top:615px;width:11px;height:15px;background:rgb(252,252,252)"></div>
<div class="a" style="left:414px;top:630px;width:21px;height:15px;background:rgb(248,248,248)"></div>
<div class="a" style="left:435px;top:630px;width:11px;height:15px;background:rgb(249,249,249)"></div>
<div class="a" style="left:414px;top:645px;width:21px;height:15px;background:rgb(220,220,220)"></div>
<div class="a" style="left:435px;top:645px;width:11px;height:15px;background:rgb(228,228,228)"></div>
<div class="a" style="left:414px;top:660px;width:21px;height:15px;background:rgb(252,252,252)"></div>
<div class="a" style="left:435px;top:660px;width:11px;height:15px;background:rgb(252,252,252)"></div>
<div class="a" style="left:414px;top:675px;width:21px;height:15px;background:rgb(227,227,227)"></div>
<div class="a" style="left:435px;top:675px;width:11px;height:15px;background:rgb(233,233,233)"></div>
<div class="a" style="left:414px;top:690px;width:21px;height:15px;background:rgb(241,241,241)"></div>
<div class="a" style="left:435px;top:690px;width:11px;height:15px;background:rgb(244,244,244)"></div>
<div class="a" style="left:414px;top:705px;width:21px;height:15px;background:rgb(252,252,252)"></div>
<div class="a" style="left:435px;top:705px;width:11px;height:15px;background:rgb(252,252,252)"></div>
<div class="a" style="left:414px;top:720px;width:21px;height:15px;background:rgb(217,217,217)"></div>
<div class="a" style="left:435px;top:720px;width:11px;height:15px;background:rgb(225,225,225)"></div>
<div class="a" style="left:414px;top:735px;width:21px;height:15px;background:rgb(252,252,252)"></div>
<div class="a" style="left:435px;top:735px;width:11px;height:15px;background:rgb(252,252,252)"></div>
<div class="a" style="left:414px;top:750px;width:21px;height:15px;background:rgb(238,238,238)"></div>
<div class="a" style="left:435px;top:750px;width:11px;height:15px;background:rgb(241,241,241)"></div>
<div class="a" style="left:414px;top:765px;width:21px;height:15px;background:rgb(231,231,231)"></div>
<div class="a" style="left:435px;top:765px;width:11px;height:15px;background:rgb(236,236,236)"></div>
<div class="a" style="left:414px;top:780px;width:21px;height:15px;background:rgb(252,252,252)"></div>
<div class="a" style="left:435px;top:780px;width:11px;height:15px;background:rgb(252,252,252)"></div>
<div class="a" style="left:414px;top:795px;width:21px;height:15px;background:rgb(217,217,217)"></div>
<div class="a" style="left:435px;top:795px;width:11px;height:15px;background:rgb(225,225,225)"></div>
<div class="a" style="left:414px;top:810px;width:21px;height:15px;background:rgb(252,252,252)"></div>
<div class="a" style="left:435px;top:810px;width:11px;height:15px;background:rgb(252,252,252)"></div>
<div class="a" style="left:414px;top:825px;width:21px;height:15px;background:rgb(252,252,252)"></div>
<div class="a" style="left:435px;top:825px;width:11px;height:15px;background:rgb(252,252,252)"></div>
<div class="a" style="left:414px;top:840px;width:21px;height:15px;background:rgb(252,252,252)"></div>
<div class="a" style="left:435px;top:840px;width:11px;height:15px;background:rgb(252,252,252)"></div>
<div class="a" style="left:414px;top:855px;width:21px;height:15px;background:rgb(252,252,252)"></div>
<div class="a" style="left:435px;top:855px;width:11px;height:15px;background:rgb(252,252,252)"></div>
<div class="a" style="left:414px;top:870px;width:21px;height:15px;background:rgb(227,227,227)"></div>
<div class="a" style="left:435px;top:870px;width:11px;height:15px;background:rgb(233,233,233)"></div>
<div class="a" style="left:414px;top:885px;width:21px;height:15px;background:rgb(241,241,241)"></div>
<div class="a" style="left:435px;top:885px;width:11px;height:15px;background:rgb(244,244,244)"></div>
<div class="a" style="left:414px;top:900px;width:21px;height:3px;background:rgb(252,252,252)"></div>
<div class="a" style="left:435px;top:900px;width:11px;height:3px;background:rgb(252,252,252)"></div>
<div class="a" style="left:1701px;top:329px;width:8px;height:580px;background:linear-gradient(to right,rgba(0,0,0,0),rgba(0,0,0,0.05))"></div>
<div class="a" style="left:1709px;top:329px;width:110px;height:580px;background:#fff;border-left:1px solid #e6e6e6"></div>
<div class="a" style="left:1710px;top:329px;width:110px;height:66px;background:#f2f2f2"></div>
<div class="a" style="left:1710px;top:435px;width:110px;height:38px;background:#f2f2f2"></div>
<div class="hl" style="left:1709px;top:395px;width:110px"></div>
<div class="hl" style="left:1709px;top:434px;width:110px"></div>
<div class="hl" style="left:1709px;top:473px;width:110px"></div>
<div class="hl" style="left:1709px;top:512px;width:110px"></div>
<div class="hl" style="left:1709px;top:551px;width:110px"></div>
<div class="hl" style="left:1709px;top:590px;width:110px"></div>
<div class="hl" style="left:1709px;top:629px;width:110px"></div>
<div class="hl" style="left:1709px;top:668px;width:110px"></div>
<div class="hl" style="left:1709px;top:707px;width:110px"></div>
<div class="hl" style="left:1709px;top:746px;width:110px"></div>
<div class="hl" style="left:1709px;top:785px;width:110px"></div>
<div class="hl" style="left:1709px;top:824px;width:110px"></div>
<div class="hl" style="left:1709px;top:863px;width:110px"></div>
<div class="hl" style="left:1709px;top:902px;width:110px"></div>
<div class="a tb" style="left:1745px;top:352px">操作</div>
<div class="op" style="left:1731px;top:405px">汇总详情</div>
<div class="op" style="left:1731px;top:444px">汇总详情</div>
<div class="op" style="left:1731px;top:483px">汇总详情</div>
<div class="op" style="left:1731px;top:522px">汇总详情</div>
<div class="op" style="left:1731px;top:561px">汇总详情</div>
<div class="op" style="left:1731px;top:600px">汇总详情</div>
<div class="op" style="left:1731px;top:639px">汇总详情</div>
<div class="op" style="left:1731px;top:678px">汇总详情</div>
<div class="op" style="left:1731px;top:717px">汇总详情</div>
<div class="op" style="left:1731px;top:756px">汇总详情</div>
<div class="op" style="left:1731px;top:795px">汇总详情</div>
<div class="op" style="left:1731px;top:834px">汇总详情</div>
<div class="op" style="left:1731px;top:873px">汇总详情</div>
<div class="a" style="left:225px;top:279px;width:574px;height:621px;border:3px solid #ff2d2d;width:1574px"></div>
</body></html>
